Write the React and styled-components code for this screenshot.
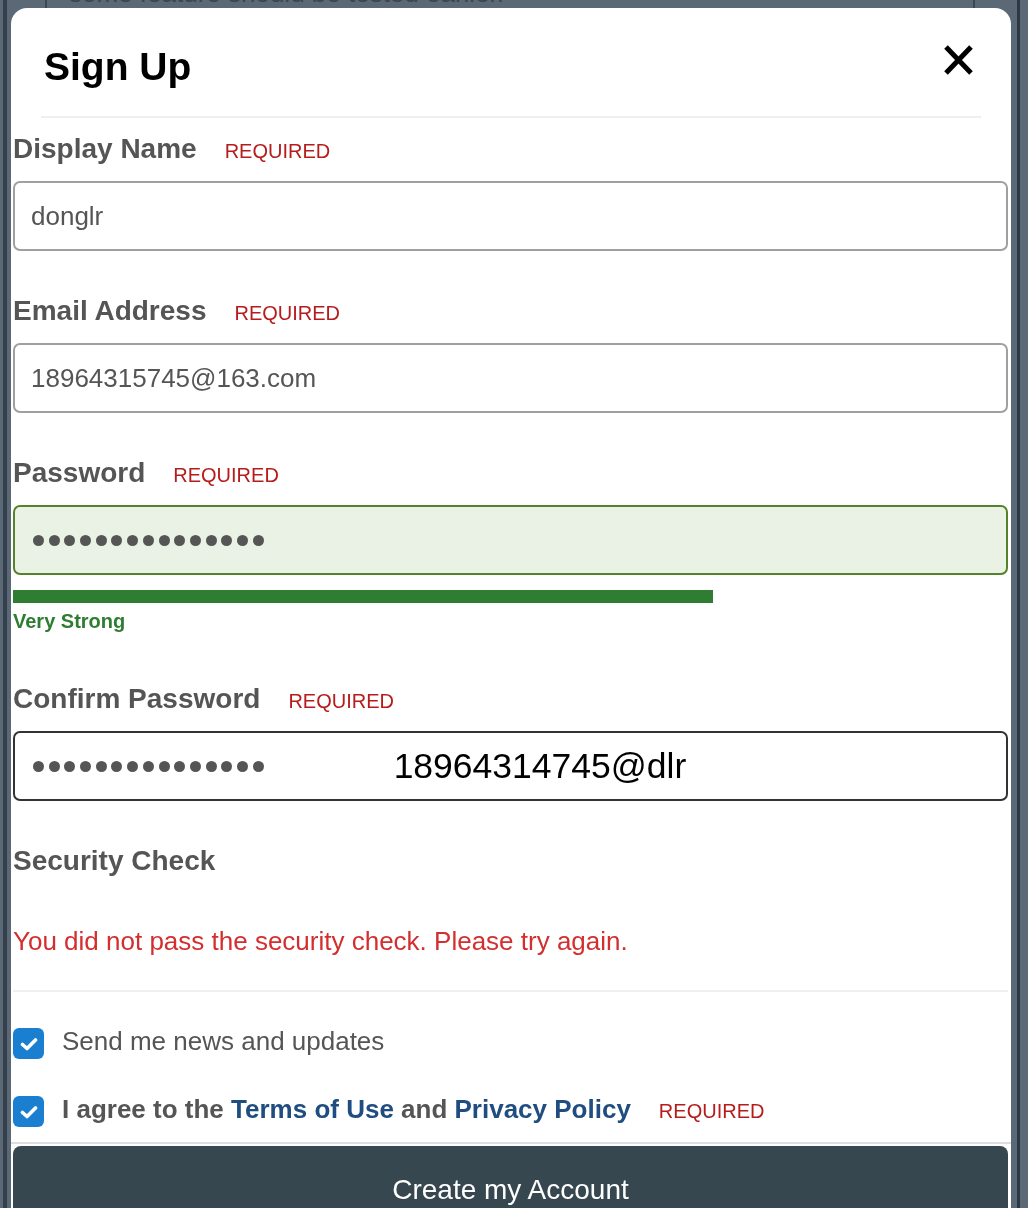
import React from 'react'
import styled, { createGlobalStyle } from 'styled-components'

const GlobalStyle = createGlobalStyle`
  html, body {
    margin: 0;
    padding: 0;
    background: #5b6876;
    font-family: "Liberation Sans", Arial, sans-serif;
  }
  * { box-sizing: border-box; }
`

// page behind the dialog, dimmed by the overlay
const Backdrop = styled.div`
  height: 1208px;
  margin: 0 8px 0 3px;
  border-left: 4px solid #34414d;
  border-right: 3px solid #2c3945;
  overflow: hidden;
`
const BackCard = styled.div`
  margin: 0 42px 0 38px;
  height: 100%;
  border-left: 2px solid #3b4753;
  border-right: 2px solid #3b4753;
`
const BackText = styled.div`
  margin: -22px 0 0 22px;
  font-size: 26px;
  line-height: 30px;
  color: #3a4652;
`

const Modal = styled.div`
  position: fixed;
  top: 8px;
  left: 11px;
  width: 1000px;
  bottom: 0;
  background: #fff;
  border-radius: 16px 16px 0 0;
  overflow: hidden;
`
const Header = styled.div`
  display: flex;
  justify-content: space-between;
  align-items: flex-start;
  height: 110px;
  margin: 0 30px;
  padding: 0 8px 0 3px;
  border-bottom: 2px solid #efefef;
`
const Title = styled.h1`
  margin: 39px 0 0;
  font-size: 39px;
  line-height: 39px;
  font-weight: 700;
  color: #000;
`
const Close = styled.button`
  margin-top: 37px;
  padding: 0;
  border: 0;
  background: none;
  width: 29px;
  height: 30px;
  display: flex;
`
const Body = styled.div`
  padding: 15px 3px 0 2px;
`
const Group = styled.div`
  margin-bottom: ${p => p.$gap || 44}px;
`
const LabelRow = styled.div`
  display: flex;
  align-items: baseline;
  gap: 28px;
  height: 32px;
  margin-bottom: ${p => p.$mb ?? 16}px;
`
const Label = styled.label`
  font-size: 28px;
  line-height: 32px;
  font-weight: 700;
  color: #555;
`
const Required = styled.span`
  font-size: 20px;
  color: #b71c1c;
  font-weight: 400;
`
const Field = styled.div`
  display: flex;
  align-items: center;
  height: 70px;
  padding: 0 16px;
  border: 2px solid ${p => p.$state === 'valid' ? '#55832a' : p.$state === 'focus' ? '#333' : '#a0a0a0'};
  background: ${p => p.$state === 'valid' ? '#eaf1e5' : '#fff'};
  border-radius: 7px;
  font-size: 26px;
  color: #555;
`
const Dots = styled.div`
  display: flex;
  gap: 4.7px;
  margin-left: 2px;
`
const Dot = styled.span`
  width: 11px;
  height: 11px;
  border-radius: 50%;
  background: #555;
`
const Suggest = styled.span`
  margin-left: 130px;
  font-size: 35.5px;
  color: #000;
`
const Meter = styled.div`
  margin-top: 15px;
  height: 13px;
  width: 700px;
  background: #2e7d32;
`
const MeterText = styled.div`
  margin-top: 6px;
  font-size: 20px;
  line-height: 24px;
  font-weight: 700;
  color: #2e7d32;
`
const ErrorText = styled.div`
  margin-top: 49px;
  padding-bottom: 34px;
  border-bottom: 2px solid #efefef;
  font-size: 26px;
  line-height: 30px;
  color: #d32f2f;
`
const CheckRow = styled.div`
  display: flex;
  align-items: flex-start;
  gap: 18px;
  margin-top: ${p => p.$mt}px;
  font-size: 26px;
  line-height: 36px;
  color: #555;
  font-weight: ${p => p.$bold ? 700 : 400};
`
const Box = styled.span`
  flex: none;
  width: 31px;
  height: 31px;
  margin-top: 5px;
  border-radius: 6px;
  background: #1a7fd1;
  display: flex;
  align-items: center;
  justify-content: center;
`
const Link = styled.a`
  color: #1f4d80;
  text-decoration: none;
`
const InlineRequired = styled(Required)`
  margin-left: 28px;
`
const Footer = styled.div`
  margin-top: 13px;
  border-top: 2px solid #dedede;
  padding: 2px 3px 0 2px;
`
const Submit = styled.button`
  width: 100%;
  height: 88px;
  border: 0;
  border-radius: 8px;
  background: #37474f;
  color: #fff;
  font-family: inherit;
  font-size: 28px;
`

const Password = ({ count = 15 }) => (
  <Dots>
    {Array.from({ length: count }).map((_, i) => <Dot key={i} />)}
  </Dots>
)

const Check = () => (
  <Box>
    <svg width="18" height="14" viewBox="0 0 18 14">
      <path d="M2.5 7.5 L7 11.5 L15.5 3" fill="none" stroke="#fff" strokeWidth="3.6" strokeLinecap="round" strokeLinejoin="round" />
    </svg>
  </Box>
)

const App = () => {
  return (
    <>
      <GlobalStyle />
      <Backdrop>
        <BackCard>
          <BackText>some feature should be tested earlier.</BackText>
        </BackCard>
      </Backdrop>
      <Modal>
        <Header>
          <Title>Sign Up</Title>
          <Close aria-label="close">
            <svg width="29" height="30" viewBox="0 0 29 30">
              <path d="M2 2 L27 28 M27 2 L2 28" stroke="#000" strokeWidth="5" />
            </svg>
          </Close>
        </Header>
        <Body>
          <Group>
            <LabelRow><Label>Display Name</Label><Required>REQUIRED</Required></LabelRow>
            <Field>donglr</Field>
          </Group>
          <Group>
            <LabelRow><Label>Email Address</Label><Required>REQUIRED</Required></LabelRow>
            <Field>18964315745@163.com</Field>
          </Group>
          <Group $gap={50}>
            <LabelRow><Label>Password</Label><Required>REQUIRED</Required></LabelRow>
            <Field $state="valid"><Password /></Field>
            <Meter />
            <MeterText>Very Strong</MeterText>
          </Group>
          <Group>
            <LabelRow><Label>Confirm Password</Label><Required>REQUIRED</Required></LabelRow>
            <Field $state="focus"><Password /><Suggest>18964314745@dlr</Suggest></Field>
          </Group>
          <LabelRow $mb={0}><Label>Security Check</Label></LabelRow>
          <ErrorText>You did not pass the security check. Please try again.</ErrorText>
          <CheckRow $mt={31}>
            <Check />
            <span>Send me news and updates</span>
          </CheckRow>
          <CheckRow $mt={32} $bold>
            <Check />
            <span>
              I agree to the <Link>Terms of Use</Link> and <Link>Privacy Policy</Link>
              <InlineRequired>REQUIRED</InlineRequired>
            </span>
          </CheckRow>
        </Body>
        <Footer>
          <Submit>Create my Account</Submit>
        </Footer>
      </Modal>
    </>
  )
}

export default App
